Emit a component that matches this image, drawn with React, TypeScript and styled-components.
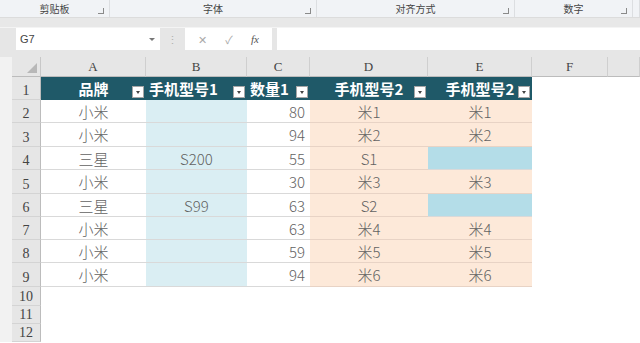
import styled, { createGlobalStyle } from 'styled-components';

const GlobalStyle = createGlobalStyle`
   html, body {
      margin: 0;
      padding: 0;
      background: #ffffff;
   }
   * {
      box-sizing: border-box;
   }
`;

const Page = styled.div`
   width: 640px;
   height: 343px;
   overflow: hidden;
   display: flex;
   flex-direction: column;
   font-family: 'Noto Sans CJK SC', 'Noto Sans', sans-serif;
   background: #e6e6e6;
`;

const Ribbon = styled.div`
   height: 17px;
   display: grid;
   grid-template-columns: 110px 207px 198px 118px 1fr;
   background: #f1f3f6;
`;

const RibbonGroup = styled.div`
   position: relative;
   display: flex;
   align-items: center;
   justify-content: center;
   border-right: 1px solid #dcdee1;
   font-size: 10px;
   color: #444;
   line-height: 1;
`;

const Launcher = styled.span`
   position: absolute;
   right: 5px;
   bottom: 3px;
   width: 6px;
   height: 6px;
   border-right: 1px solid #8a8a8a;
   border-bottom: 1px solid #8a8a8a;
`;

const RibbonGap = styled.div`
   height: 11px;
   background: #e8e8e8;
   border-top: 1px solid #dcdcdc;
   border-bottom: 1px solid #f4f4f4;
`;

const FormulaBar = styled.div`
   height: 22px;
   display: flex;
   align-items: stretch;
   padding-left: 16px;
   background: #e6e6e6;
`;

const NameBox = styled.div`
   width: 144px;
   background: #fff;
   display: flex;
   align-items: center;
   justify-content: space-between;
   padding: 0 5px 0 4px;
   font-family: 'Liberation Sans', sans-serif;
   font-size: 11px;
   color: #444;
`;

const Caret = styled.span`
   width: 0;
   height: 0;
   border-left: 3px solid transparent;
   border-right: 3px solid transparent;
   border-top: 3px solid #777;
`;

const Grip = styled.div`
   width: 25px;
   display: flex;
   align-items: center;
   justify-content: center;
   color: #b0b0b0;
   font-size: 11px;
`;

const FxBox = styled.div`
   width: 87px;
   background: #fff;
   display: flex;
   align-items: center;
   justify-content: space-around;
   padding: 0 4px;
   color: #aaa;
   font-size: 11px;
`;

const FxLabel = styled.span`
   font-family: 'Liberation Serif', serif;
   font-style: italic;
   color: #555;
   font-size: 11px;
`;

const FormulaInput = styled.div`
   flex: 1;
   margin-left: 5px;
   background: #fff;
`;

const BarGap = styled.div`
   height: 7px;
   background: #e6e6e6;
`;

const Sheet = styled.div`
   flex: 1;
   display: grid;
   grid-template-columns: 12px 29px 105px 101px 63px 118px 104px 76px 1fr;
   grid-template-rows: 20px 23px 23px 24px 23px 24px 23px 23px 23px 24px 19px 18px 18px;
   background: #fff;
`;

const Gutter = styled.div`
   grid-column: 1;
   grid-row: 1 / -1;
   background: #f2f2f2;
`;

const Corner = styled.div`
   position: relative;
   background: #e6e6e6;
   border-right: 1px solid #c8c8c8;
   border-bottom: 1px solid #bcbcbc;

   &::after {
      content: '';
      position: absolute;
      right: 3px;
      bottom: 3px;
      width: 0;
      height: 0;
      border-left: 10px solid transparent;
      border-bottom: 10px solid #b8b8b8;
   }
`;

const ColHeader = styled.div`
   background: #e6e6e6;
   border-right: 1px solid #cfcfcf;
   border-bottom: 1px solid #bcbcbc;
   display: flex;
   align-items: center;
   justify-content: center;
   font-family: 'Liberation Serif', serif;
   font-size: 13px;
   color: #444;
`;

const RowHeader = styled.div`
   background: #e6e6e6;
   border-right: 1px solid #bcbcbc;
   border-bottom: 1px solid #d4d4d4;
   display: flex;
   align-items: flex-end;
   justify-content: center;
   padding-bottom: 1px;
   font-family: 'Liberation Serif', serif;
   font-size: 14px;
   color: #444;
   line-height: 1;
`;

const HeadCell = styled.div<{ $left?: boolean }>`
   position: relative;
   background: #1f5968;
   color: #fff;
   font-weight: 700;
   font-size: 15px;
   display: flex;
   align-items: center;
   justify-content: ${(p) => (p.$left ? 'flex-start' : 'center')};
   padding-left: ${(p) => (p.$left ? '3px' : '0')};
   white-space: nowrap;
   overflow: hidden;
   line-height: 1;
`;

const FilterButton = styled.span`
   position: absolute;
   right: 2px;
   bottom: 2px;
   width: 12px;
   height: 12px;
   background: #fff;
   border: 1px solid #a6a6a6;
   display: flex;
   align-items: center;
   justify-content: center;

   &::after {
      content: '';
      border-left: 2.5px solid transparent;
      border-right: 2.5px solid transparent;
      border-top: 3px solid #444;
   }
`;

const fills: Record<string, string> = {
   white: '#ffffff',
   blue: '#daeef3',
   peach: '#fde9d9',
   sky: '#b4dde8',
};

const Cell = styled.div<{ $fill: string; $align: string }>`
   background: ${(p) => fills[p.$fill]};
   border-bottom: 1px solid
      ${(p) => (p.$fill === 'peach' ? '#e8d3c5' : '#d9d9d9')};
   display: flex;
   align-items: center;
   justify-content: ${(p) => p.$align};
   padding: 0 5px 0 5px;
   font-size: 15px;
   font-weight: 300;
   color: #626262;
   line-height: 1;
`;

const Blank = styled.div`
   background: #fff;
`;

const columns = ['A', 'B', 'C', 'D', 'E', 'F', ''];

const headers = [
   { text: '品牌', left: false },
   { text: '手机型号1', left: true },
   { text: '数量1', left: true },
   { text: '手机型号2', left: false },
   { text: '手机型号2', left: false },
];

const rows = [
   ['小米', '', '80', '米1', '米1'],
   ['小米', '', '94', '米2', '米2'],
   ['三星', 'S200', '55', 'S1', null],
   ['小米', '', '30', '米3', '米3'],
   ['三星', 'S99', '63', 'S2', null],
   ['小米', '', '63', '米4', '米4'],
   ['小米', '', '59', '米5', '米5'],
   ['小米', '', '94', '米6', '米6'],
];

const colFill = ['white', 'blue', 'white', 'peach', 'peach'];
const colAlign = ['center', 'center', 'flex-end', 'center', 'center'];

export default function App() {
   return (
      <>
         <GlobalStyle />
         <Page>
            <Ribbon>
               <RibbonGroup>
                  剪贴板
                  <Launcher />
               </RibbonGroup>
               <RibbonGroup>
                  字体
                  <Launcher />
               </RibbonGroup>
               <RibbonGroup>
                  对齐方式
                  <Launcher />
               </RibbonGroup>
               <RibbonGroup>
                  数字
                  <Launcher />
               </RibbonGroup>
               <RibbonGroup />
            </Ribbon>
            <RibbonGap />
            <FormulaBar>
               <NameBox>
                  G7
                  <Caret />
               </NameBox>
               <Grip>⋮</Grip>
               <FxBox>
                  <span>✕</span>
                  <span>✓</span>
                  <FxLabel>fx</FxLabel>
               </FxBox>
               <FormulaInput />
            </FormulaBar>
            <BarGap />
            <Sheet>
               <Gutter />
               <Corner />
               {columns.map((c, i) => (
                  <ColHeader key={i}>{c}</ColHeader>
               ))}

               <RowHeader>1</RowHeader>
               {headers.map((h, i) => (
                  <HeadCell key={i} $left={h.left}>
                     {h.text}
                     <FilterButton />
                  </HeadCell>
               ))}
               <Blank />
               <Blank />

               {rows.map((r, ri) => [
                  <RowHeader key={`h${ri}`}>{ri + 2}</RowHeader>,
                  ...r.map((v, ci) => (
                     <Cell
                        key={`${ri}-${ci}`}
                        $fill={v === null ? 'sky' : colFill[ci]}
                        $align={colAlign[ci]}
                     >
                        {v}
                     </Cell>
                  )),
                  <Blank key={`f${ri}`} />,
                  <Blank key={`g${ri}`} />,
               ])}

               {[10, 11, 12].map((n) => [
                  <RowHeader key={`h${n}`}>{n}</RowHeader>,
                  <Blank key={`b${n}`} style={{ gridColumn: '3 / -1' }} />,
               ])}
            </Sheet>
         </Page>
      </>
   );
}
